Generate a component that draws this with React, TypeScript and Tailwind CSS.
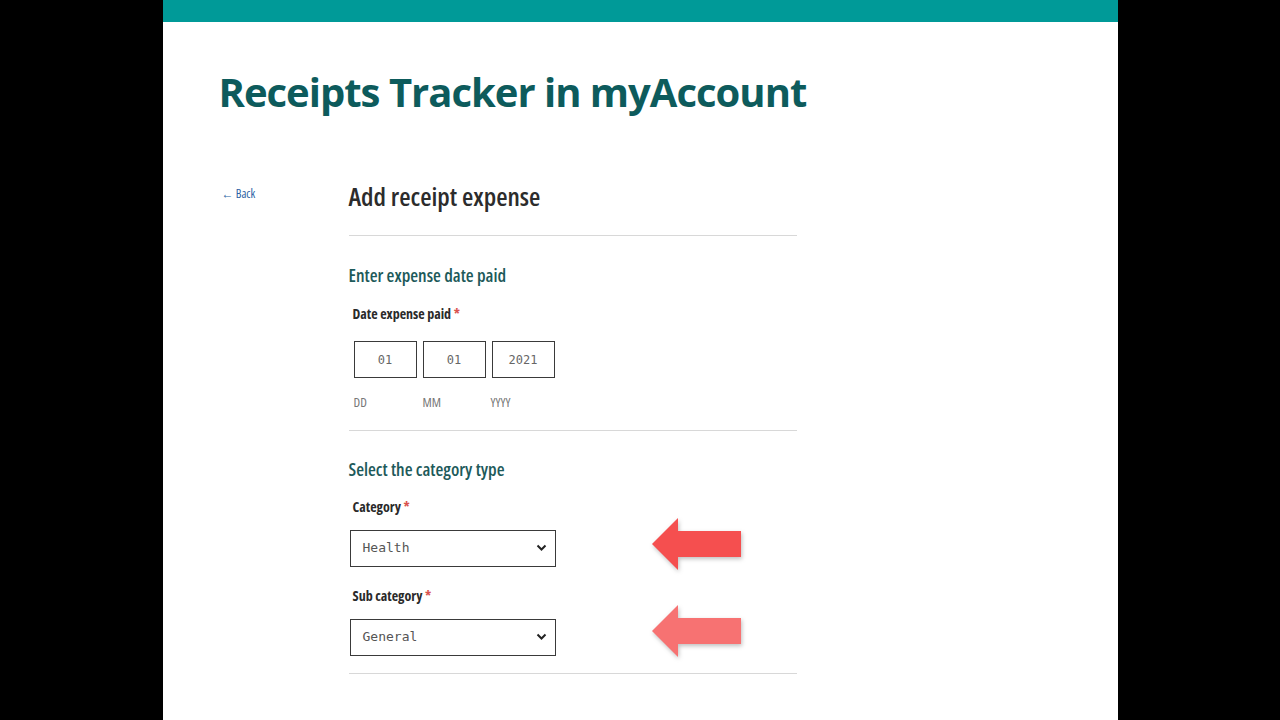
import React from "react";

const condensed = {
  fontFamily: '"Open Sans", sans-serif',
  fontStretch: "condensed",
};

function Arrow({ color }: { color: string }) {
  return (
    <svg width="92" height="54" viewBox="0 0 92 54" className="drop-shadow-[1px_2px_2px_rgba(0,0,0,0.25)]">
      <polygon points="1,27 27,1 27,14 90,14 90,40 27,40 27,53" fill={color} />
    </svg>
  );
}

function SelectBox({ value }: { value: string }) {
  return (
    <div className="flex items-center justify-between w-[206px] h-[37px] border border-[#3a3a3a] pl-3 pr-2 bg-white">
      <span className="text-[13px] text-[#555]" style={{ fontFamily: '"DejaVu Sans Mono", monospace', fontStretch: "normal" }}>
        {value}
      </span>
      <svg width="11" height="8" viewBox="0 0 11 8">
        <path d="M1.5 1.5 L5.5 5.5 L9.5 1.5" stroke="#222" strokeWidth="2" fill="none" />
      </svg>
    </div>
  );
}

function DateBox({ value }: { value: string }) {
  return (
    <div className="flex items-center justify-center w-[63px] h-[37px] border border-[#3a3a3a]">
      <span className="text-[12px] text-[#666]" style={{ fontFamily: '"DejaVu Sans Mono", monospace', fontStretch: "normal" }}>
        {value}
      </span>
    </div>
  );
}

export default function App() {
  return (
    <div className="w-[1280px] h-[720px] bg-black flex justify-center overflow-hidden">
      <div className="w-[955px] h-full bg-white flex flex-col" style={condensed}>
        <div className="h-[22px] bg-[#009a98]" />
        <h1
          className="mt-[50px] ml-[56px] text-[40px] font-bold text-[#0d5b5c] leading-none"
          style={{ fontFamily: '"Open Sans", sans-serif', fontStretch: "normal", letterSpacing: "-1px" }}
        >
          Receipts Tracker in myAccount
        </h1>

        <div className="flex mt-[66px]">
          <div className="w-[186px] pl-[59px] pt-[2px]">
            <span className="text-[12px] text-[#2b5fa3]">← Back</span>
          </div>
          <div className="w-[448px] flex flex-col">
            <h2 className="text-[26px] font-semibold text-[#2c2c2c] leading-none mt-[5px]">Add receipt expense</h2>
            <div className="h-px bg-[#d8d8d8] mt-[26px]" />

            <h3 className="text-[18px] font-semibold text-[#1d5a5a] mt-[30px] leading-none">Enter expense date paid</h3>
            <div className="text-[14px] font-bold text-[#2a2a2a] mt-[23px] ml-[4px] leading-none">
              Date expense paid <span className="text-[#d9534f]">*</span>
            </div>
            <div className="flex gap-[6px] ml-[5px] mt-[20px]">
              <DateBox value="01" />
              <DateBox value="01" />
              <DateBox value="2021" />
            </div>
            <div className="flex ml-[5px] mt-[18px] text-[13px] text-[#777] leading-none">
              <span className="w-[69px]">DD</span>
              <span className="w-[68px]">MM</span>
              <span>YYYY</span>
            </div>
            <div className="h-px bg-[#d8d8d8] mt-[21px]" />

            <h3 className="text-[18px] font-semibold text-[#1d5a5a] mt-[29px] leading-none">Select the category type</h3>
            <div className="text-[14px] font-bold text-[#2a2a2a] mt-[22px] ml-[4px] leading-none">
              Category <span className="text-[#d9534f]">*</span>
            </div>
            <div className="flex items-center mt-[11px] ml-[1px]">
              <SelectBox value="Health" />
              <div className="ml-[95px] -mt-[8px]">
                <Arrow color="#f54f4f" />
              </div>
            </div>
            <div className="text-[14px] font-bold text-[#2a2a2a] mt-[18px] ml-[4px] leading-none">
              Sub category <span className="text-[#d9534f]">*</span>
            </div>
            <div className="flex items-center mt-[13px] ml-[1px]">
              <SelectBox value="General" />
              <div className="ml-[95px] -mt-[12px]">
                <Arrow color="#f77272" />
              </div>
            </div>
            <div className="h-px bg-[#d8d8d8] mt-[15px]" />
          </div>
        </div>
      </div>
    </div>
  );
}
